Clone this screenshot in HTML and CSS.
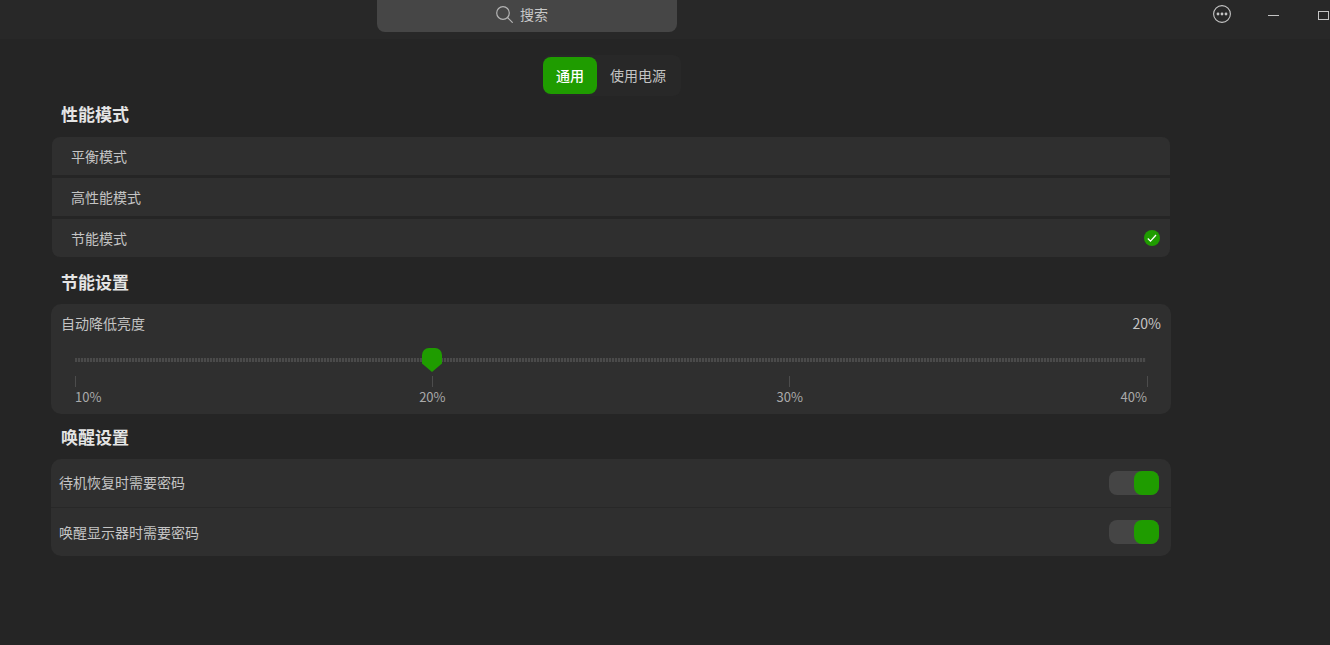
FILE: index.html
```html
<!DOCTYPE html>
<html lang="zh-CN">
<head>
<meta charset="utf-8">
<title>电源</title>
<link rel="stylesheet" href="styles.css">
</head>
<body>
<header class="titlebar">
  <div class="search">
    <svg width="17" height="17" viewBox="0 0 17 17" fill="none" stroke="#b4b4b4" stroke-width="1.2"><circle cx="7" cy="7" r="6.300"/><path d="M11.500 11.500l5.200 5.200"/></svg>
    <span class="search-label">搜索</span>
  </div>
  <div class="win-controls">
    <svg class="ctl-more" width="18" height="18" viewBox="0 0 18 18"><circle cx="9" cy="9" r="8.400" fill="none" stroke="#c4c4c4" stroke-width="1.100"/><circle cx="5" cy="9" r="1.400" fill="#c4c4c4"/><circle cx="9" cy="9" r="1.400" fill="#c4c4c4"/><circle cx="13" cy="9" r="1.400" fill="#c4c4c4"/></svg>
    <span class="ctl-min"></span>
    <span class="ctl-max"></span>
  </div>
</header>
<main class="content">
  <nav class="tabs">
    <span class="tab active">通用</span>
    <span class="tab">使用电源</span>
  </nav>
  <h2 class="heading first">性能模式</h2>
  <ul class="modes">
    <li class="mode">平衡模式</li>
    <li class="mode">高性能模式</li>
    <li class="mode">节能模式
      <svg width="16" height="16" viewBox="0 0 16 16"><circle cx="8" cy="8" r="8" fill="#1f9c00"/><path d="M3.800 8.500l2.700 2.600L12 5" fill="none" stroke="#fff" stroke-width="1.300"/></svg>
    </li>
  </ul>
  <h2 class="heading second">节能设置</h2>
  <section class="card slider-card">
    <div class="slider-head"><span>自动降低亮度</span><span>20%</span></div>
    <div class="slider">
      <div class="track"></div>
      <svg class="thumb" width="20" height="24" viewBox="0 0 20 24"><path d="M7 0h6a7 7 0 0 1 7 7v8.500L10 24 0 15.500V7a7 7 0 0 1 7-7z" fill="#1f9c00"/></svg>
      <div class="ticks"><i></i><i></i><i></i><i></i></div>
      <div class="tick-labels"><span>10%</span><span>20%</span><span>30%</span><span>40%</span></div>
    </div>
  </section>
  <h2 class="heading third">唤醒设置</h2>
  <section class="card wake-card">
    <div class="wake-row"><span class="wake-label">待机恢复时需要密码</span><span class="switch"><i></i></span></div>
    <div class="wake-row"><span>唤醒显示器时需要密码</span><span class="switch"><i></i></span></div>
  </section>
</main>
</body>
</html>
```
FILE: styles.css
```css
* { box-sizing: border-box; }
html, body { margin: 0; height: 100%; overflow: hidden; }
body {
  background: #252525;
  color: #c4c4c4;
  font: 14px/20px "Noto Sans CJK SC", "Noto Sans", sans-serif;
}
.titlebar {
  height: 39px;
  background: #282828;
  display: flex;
  padding-left: 377px;
}
.search {
  width: 300px;
  height: 32px;
  background: #464646;
  border-radius: 0 0 8px 8px;
  display: flex;
  align-items: center;
  justify-content: center;
  gap: 7px;
  padding: 0 10px 3px 0;
  color: #c8c8c8;
}
.search-label { margin-bottom: 2px; }
.win-controls {
  margin-left: auto;
  display: flex;
  align-items: flex-start;
  width: 117px;
  flex: none;
  padding-top: 5px;
}
.ctl-more { flex: none; }
.ctl-min { width: 11px; height: 1px; background: #c4c4c4; margin: 10px 0 0 37px; flex: none; }
.ctl-max { width: 11px; height: 9px; border: 1px solid #c4c4c4; margin: 6px 0 0 39px; flex: none; }
.content { padding: 16px 159px 0 51px; }
.tabs {
  display: flex;
  width: 138px;
  height: 41px;
  margin-left: 492px;
  background: #282828;
  border-radius: 8px;
  padding: 2px 0;
}
.tab { width: 84px; height: 37px; line-height: 37px; padding-left: 13px; border-radius: 8px; flex: none; }
.tab.active { width: 54px; background: #1f9c00; color: #fff; font-weight: 500; }
.heading {
  margin: 0;
  padding-left: 10px;
  font-size: 17px;
  line-height: 24px;
  font-weight: 700;
  color: #e4e4e4;
}
.heading.first { margin-top: 6px; }
.heading.second { margin-top: 13px; }
.heading.third { margin-top: 11px; }
.modes { list-style: none; margin: 11px 1px 0; padding: 0; display: flex; flex-direction: column; gap: 3px; }
.mode {
  height: 38px;
  background: #2f2f2f;
  padding: 0 10px 0 19px;
  display: flex;
  align-items: center;
  justify-content: space-between;
}
.mode:first-child { border-radius: 8px 8px 0 0; }
.mode:last-child { border-radius: 0 0 8px 8px; }
.card { background: #2f2f2f; border-radius: 10px; margin-top: 10px; }
.slider-card { height: 110px; padding: 9px 10px 0; }
.slider-head { display: flex; justify-content: space-between; }
.slider { position: relative; margin: 0 14px; padding-top: 25px; }
.track {
  height: 4px;
  margin-right: 1px;
  background: repeating-linear-gradient(90deg, #4a4a4a 0 2px, #333 2px 3px);
}
.thumb { position: absolute; left: 347px; top: 15px; }
.ticks { display: flex; justify-content: space-between; margin-top: 14px; }
.ticks i { width: 1px; height: 11px; background: #4c4c4c; }
.ticks i:last-child { transform: translateX(1px); }
.tick-labels { display: flex; justify-content: space-between; font-size: 13px; line-height: 16px; margin-top: 2px; color: #aaa; }
.tick-labels span { width: 0; display: flex; justify-content: center; white-space: nowrap; }
.tick-labels span:first-child { justify-content: flex-start; }
.tick-labels span:last-child { justify-content: flex-end; }
.wake-card { height: 97px; overflow: hidden; }
.wake-row {
  height: 48px;
  padding: 0 12px 0 8px;
  display: flex;
  align-items: center;
  justify-content: space-between;
}
.wake-label { margin-bottom: 2px; }
.wake-row + .wake-row { height: 49px; border-top: 1px solid #282828; }
.switch { width: 50px; height: 24px; background: #454545; border-radius: 8px; display: flex; justify-content: flex-end; }
.switch i { width: 25px; height: 24px; background: #1f9c00; border-radius: 8px; }
```
